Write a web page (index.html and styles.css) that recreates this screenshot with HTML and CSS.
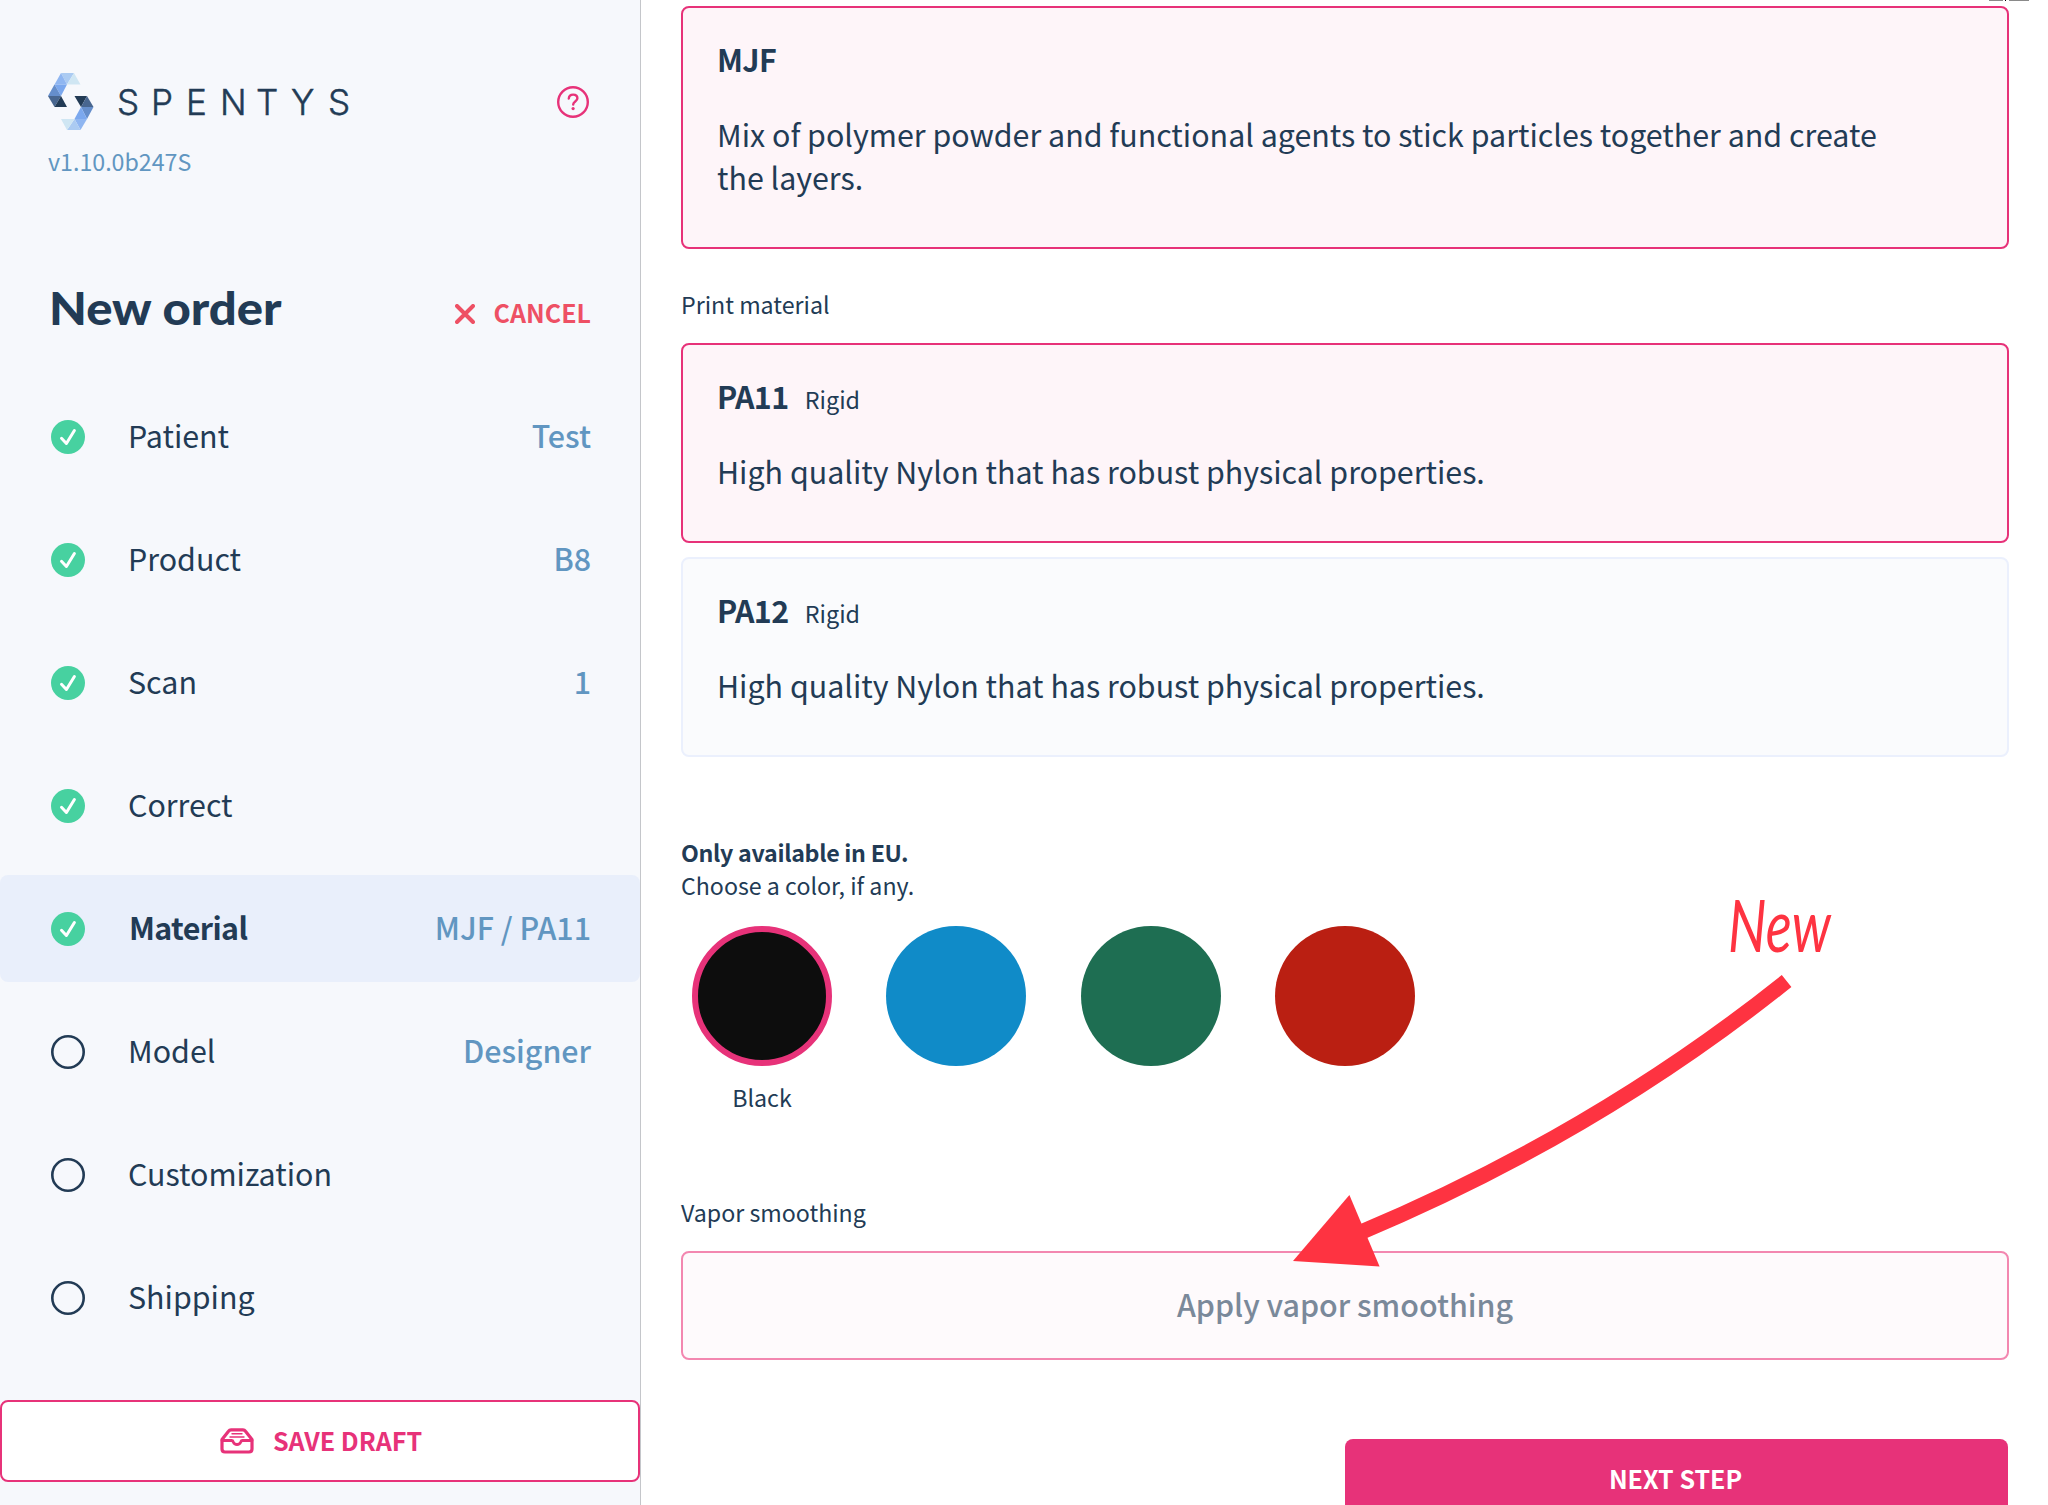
FILE: index.html
```html
<!DOCTYPE html>
<html lang="en">
<head>
    <meta charset="utf-8">
    <title>Spentys - New order</title>
    <link rel="stylesheet" href="styles.css">
</head>
<body>
    <svg class="sprite">
        <symbol id="check" viewBox="0 0 34 34">
            <circle cx="17" cy="17" r="17" fill="#47d1a0"/>
            <path d="M10.5 18.3l4.9 5.2 8-13" fill="none" stroke="#fff" stroke-width="3" stroke-linecap="round" stroke-linejoin="round"/>
        </symbol>
        <symbol id="circle" viewBox="0 0 34 34">
            <circle cx="17" cy="17" r="15.7" fill="none" stroke="#223b55" stroke-width="2.6"/>
        </symbol>
    </svg>

    <div class="app">
        <aside class="sidebar">
            <header class="brand">
                <div class="logo">
                    <svg class="logo-mark" viewBox="0 0 46 57">
                        <path fill="#abcbf2" d="M13 0h13l-7 11.5z"/>
                        <path fill="#cfe6f3" d="M26 0l6.5 11.5H19z"/>
                        <path fill="#8fb6f1" d="M13 0l6 11.5H6.5z"/>
                        <path fill="#7ba8ee" d="M6.5 11.5H19L13 23z"/>
                        <path fill="#658ecb" d="M6.5 11.5L13 23H0z"/>
                        <path fill="#48668f" d="M0 23h13L6.5 34z"/>
                        <path fill="#223b55" d="M13 23l6 11H6.5z"/>
                        <path fill="#223b55" d="M26.5 23H39l-6 11z"/>
                        <path fill="#48668f" d="M39 23l6.5 11H33z"/>
                        <path fill="#658ecb" d="M33 34h12.5L39 46z"/>
                        <path fill="#7ba8ee" d="M33 34l6 12H26.5z"/>
                        <path fill="#8fb6f1" d="M26.5 46H39l-6.5 11z"/>
                        <path fill="#abcbf2" d="M26.5 46l6 11H19z"/>
                        <path fill="#cfe6f3" d="M13 46h13.5L19 57z"/>
                    </svg>
                    <svg class="logo-text" viewBox="0 0 250 50">
                        <text y="38" x="0 34 69 103 139 174 211">SPENTYS</text>
                    </svg>
                </div>
                <svg class="help" viewBox="0 0 32 32">
                    <circle cx="16" cy="16" r="14.8" fill="none" stroke="#e73279" stroke-width="2.4"/>
                    <path d="M11.8 12.5c.2-2.4 1.9-3.9 4.3-3.9 2.5 0 4.3 1.5 4.3 3.7 0 3.2-4.2 3.3-4.2 6.3" fill="none" stroke="#e73279" stroke-width="2.4" stroke-linecap="round"/>
                    <circle cx="16.1" cy="22.6" r="1.6" fill="#e73279"/>
                </svg>
            </header>
            <div class="version">v1.10.0b247S</div>

            <div class="order-head">
                <h1>New order</h1>
                <a class="cancel">
                    <svg viewBox="0 0 20 20"><path d="M2 2l16 16M18 2L2 18" stroke="#ee5064" stroke-width="4" stroke-linecap="round"/></svg>
                    CANCEL
                </a>
            </div>

            <ul class="steps">
                <li><svg><use href="#check"/></svg><span>Patient</span><b>Test</b></li>
                <li><svg><use href="#check"/></svg><span>Product</span><b>B8</b></li>
                <li><svg><use href="#check"/></svg><span>Scan</span><b>1</b></li>
                <li><svg><use href="#check"/></svg><span>Correct</span></li>
                <li class="active"><svg><use href="#check"/></svg><span>Material</span><b>MJF / PA11</b></li>
                <li><svg><use href="#circle"/></svg><span>Model</span><b>Designer</b></li>
                <li><svg><use href="#circle"/></svg><span>Customization</span></li>
                <li><svg><use href="#circle"/></svg><span>Shipping</span></li>
            </ul>

            <button class="save">
                <svg viewBox="0 0 34 26" fill="none" stroke="#e73279" stroke-linejoin="round" stroke-linecap="round">
                    <path stroke-width="3.2" d="M2 11.5L8.5 3.2Q9.5 1.8 11 1.8h12q1.5 0 2.5 1.4L32 11.5V21q0 3-3 3H5q-3 0-3-3z"/>
                    <path stroke-width="2.8" d="M2 12.5h9.5c.8 0 1.5.6 1.8 1.5.6 1.6 1.9 2.5 3.7 2.5s3.100-.9 3.700-2.500c.3-.9 1-1.500 1.800-1.500H32"/>
                    <path stroke-width="1.4" d="M12 5.8h10M10 9h14"/>
                </svg>
                <span>SAVE DRAFT</span>
            </button>
        </aside>

        <main class="content">
            <section class="card selected">
                <h2>MJF</h2>
                <p>Mix of polymer powder and functional agents to stick particles together and create the layers.</p>
            </section>

            <div class="label">Print material</div>
            <section class="card selected">
                <h2>PA11 <small>Rigid</small></h2>
                <p>High quality Nylon that has robust physical properties.</p>
            </section>
            <section class="card">
                <h2>PA12 <small>Rigid</small></h2>
                <p>High quality Nylon that has robust physical properties.</p>
            </section>

            <div class="color-info">
                <strong>Only available in EU.</strong>
                <div>Choose a color, if any.</div>
            </div>
            <div class="colors">
                <div class="color"><i class="black"></i>Black</div>
                <div class="color"><i class="blue"></i></div>
                <div class="color"><i class="green"></i></div>
                <div class="color"><i class="red"></i></div>
            </div>

            <div class="label vapor-label">Vapor smoothing</div>
            <button class="vapor">Apply vapor smoothing</button>
            <button class="next">NEXT STEP</button>
        </main>
    </div>

    <!-- annotation over the page -->
    <svg class="note" viewBox="0 -40 600 420">
        <path d="M80 342.6Q316 243.5 506.6 91" fill="none" stroke="#fe3341" stroke-width="15.4"/>
        <path d="M13 371L69.4 305 99.6 376.5z" fill="#fe3341"/>
        <text class="note-text" x="448" y="62" textLength="103" lengthAdjust="spacingAndGlyphs">New</text>
    </svg>
    <div class="edge"></div>
</body>
</html>
```
FILE: styles.css
```css
* {
    box-sizing: border-box;
}
body {
    margin: 0;
    font-family: "Noto Sans CJK JP", "Noto Sans", sans-serif;
    font-size: 30.4px;
    color: #223b55;
    background: #fff;
}
h1, h2, p, ul {
    margin: 0;
    padding: 0;
}
button {
    font: inherit;
    display: flex;
    align-items: center;
    justify-content: center;
    border-radius: 8px;
    padding: 0;
}
.sprite {
    display: none;
}
.app {
    display: flex;
    height: 1505px;
    overflow: hidden;
}

/* sidebar */
.sidebar {
    width: 641px;
    flex: none;
    background: #f6f8fc;
    border-right: 1px solid #c4c6ca;
}
.brand {
    display: flex;
    justify-content: space-between;
    align-items: center;
    padding: 73px 51px 0 48px;
    height: 130px;
}
.logo {
    display: flex;
    align-items: center;
    gap: 23px;
}
.logo-mark {
    width: 46px;
    height: 57px;
}
.logo-text {
    width: 250px;
    height: 50px;
    font-family: Inter, sans-serif;
    font-size: 35px;
    font-weight: 300;
    fill: #223b55;
    stroke: #223b55;
    stroke-width: 0.5px;
}
.help {
    width: 32px;
    height: 32px;
}
.version {
    padding-left: 48px;
    margin-top: 13px;
    font-size: 23.2px;
    line-height: 36px;
    color: #6196c1;
}
.order-head {
    display: flex;
    justify-content: space-between;
    align-items: flex-start;
    padding: 0 49px 0 49px;
    margin-top: 99px;
    height: 105px;
}
h1 {
    font-family: Lato, sans-serif;
    font-size: 45px;
    font-weight: 900;
    line-height: 60px;
    transform: scaleX(1.09);
    transform-origin: left;
}
.cancel {
    display: flex;
    align-items: center;
    gap: 19px;
    margin-top: 16px;
    font-size: 25px;
    font-weight: 700;
    line-height: 36px;
    color: #ee5064;
}
.cancel svg {
    width: 20px;
    height: 20px;
    margin-top: 3px;
}
.steps {
    list-style: none;
}
.steps li {
    display: flex;
    align-items: center;
    height: 107px;
    margin-bottom: 16px;
    padding: 0 49px 0 51px;
    border-radius: 8px;
}
.steps li:last-child {
    margin-bottom: 0;
}
.steps svg {
    width: 34px;
    height: 34px;
    margin-right: 43px;
}
.steps span,
.steps b {
    padding-bottom: 4px;
}
.steps b {
    margin-left: auto;
    font-weight: 500;
    color: #6196c1;
}
.steps .active {
    background: #e9effb;
}
.active span {
    padding-left: 1px;
    font-weight: 700;
    letter-spacing: -0.6px;
}
.save {
    width: 640px;
    height: 82px;
    margin-top: 49px;
    padding-left: 2px;
    gap: 19px;
    border: 2px solid #e73279;
    background: #fff;
    color: #e73279;
    font-size: 25.1px;
    font-weight: 700;
}
.save svg {
    width: 34px;
    height: 26px;
}
.save span {
    padding-bottom: 2px;
}

/* content */
.content {
    flex: 1;
    padding: 6px 39px 0 40px;
}
.card {
    height: 200px;
    padding: 30px 110px 0 34px;
    margin-bottom: 14px;
    border: 2px solid #ebf0fd;
    border-radius: 8px;
    background: #fafbfd;
}
.card.selected {
    border-color: #e73279;
    background: #fef5f9;
}
.card:first-child {
    height: 243px;
    margin-bottom: 0;
}
h2 {
    height: 44px;
    font-size: 30.4px;
    font-weight: 700;
    line-height: 43px;
    letter-spacing: -0.6px;
}
small {
    margin-left: 10px;
    font-size: 23.3px;
    font-weight: 400;
    letter-spacing: 0;
}
.card p {
    margin-top: 31px;
    line-height: 43px;
}
.label {
    height: 94px;
    padding-top: 37px;
    font-size: 23.2px;
    line-height: 36px;
}
.color-info {
    margin-top: 79px;
    font-size: 23.2px;
    line-height: 33px;
}
.color-info strong {
    font-weight: 700;
    letter-spacing: -0.3px;
}
.colors {
    display: flex;
    gap: 54.3px;
    margin: 24px 0 0 11px;
    height: 229px;
}
.color {
    width: 140px;
    text-align: center;
    font-size: 23.2px;
    line-height: 36px;
}
.color i {
    display: block;
    width: 140px;
    height: 140px;
    margin-bottom: 13px;
    border-radius: 50%;
}
.black {
    background: #0d0d0d;
    border: 6px solid #e73279;
}
.blue {
    background: #108bc8;
}
.green {
    background: #1e6e52;
}
.red {
    background: #ba1f12;
}
.vapor-label {
    padding-top: 39px;
    height: 96px;
}
.vapor {
    width: 100%;
    height: 109px;
    padding-bottom: 4px;
    border: 2px solid #f387b0;
    background: #fefafc;
    color: #7a899a;
    font-weight: 500;
}
.next {
    width: 663px;
    height: 82px;
    margin: 79px 1px 0 auto;
    padding: 0 2px 4px 0;
    border: 0;
    background: #e73279;
    color: #fff;
    font-size: 25px;
    font-weight: 700;
}

.note {
    position: absolute;
    left: 1280px;
    top: 850px;
    width: 600px;
    height: 420px;
}
.note-text {
    font-family: Lato, sans-serif;
    font-size: 72px;
    font-style: italic;
    font-weight: 400;
    fill: #fe3341;
}
.edge {
    position: absolute;
    left: 1989px;
    top: 0;
    width: 40px;
    height: 1px;
    background: linear-gradient(90deg, #8a8a8a 14px, #fff 14px 16px, #000 16px 17px, #fff 17px 20px, #8a8a8a 20px);
}
```
